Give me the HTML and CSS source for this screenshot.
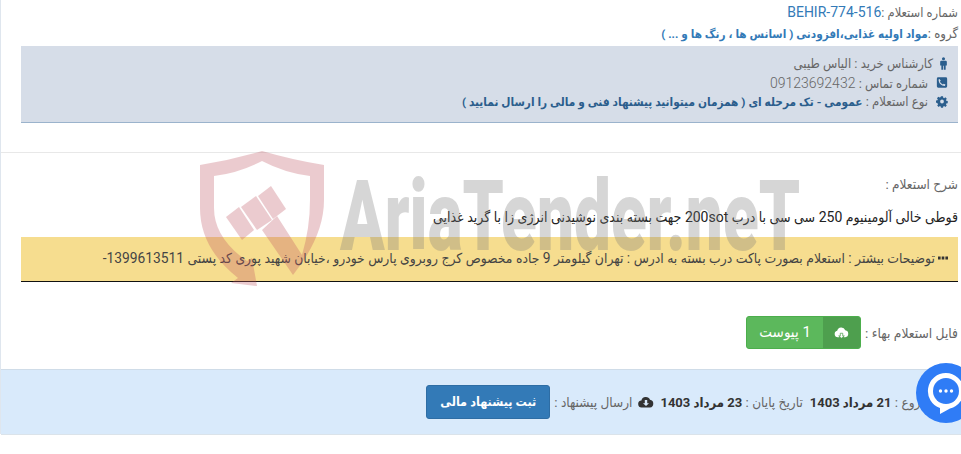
FILE: index.html
```html
<!DOCTYPE html>
<html lang="fa" dir="rtl">
<head>
  <meta charset="UTF-8">
  <meta name="viewport" content="width=device-width, initial-scale=1.0">
  <title>جزئیات استعلام</title>
  <link rel="stylesheet" href="styles.css">
</head>
<body>
  <div class="page">
    <div class="head-info">
      <div class="code-line">شماره استعلام :<span class="code">BEHIR-774-516</span></div>
      <div class="group-line">گروه :<b>مواد اولیه غذایی،افزودنی ( اسانس ها ، رنگ ها و ... )</b></div>
    </div>

    <div class="buyer-box">
      <div class="buyer-row">
        <svg class="ico ico-person" viewBox="0 0 10 14"><circle cx="5" cy="1.800" r="1.700"/><path d="M2.500 4h5a1.200 1.200 0 0 1 1.200 1.200v4H7.400V14H5.400v-4.500h-.8V14H2.600V9.200H1.300v-4A1.200 1.200 0 0 1 2.500 4z"/></svg>
        <span>کارشناس خرید : الیاس طیبی</span>
      </div>
      <div class="buyer-row">
        <svg class="ico" viewBox="0 0 14 14"><path d="M2.500 1h9A1.500 1.500 0 0 1 13 2.500v9a1.500 1.500 0 0 1-1.500 1.500h-9A1.500 1.500 0 0 1 1 11.500v-9A1.500 1.500 0 0 1 2.500 1zm1.600 2L3 3.600C3 8 6 11 10.400 11l.6-1.600-2.100-1-.8 1C6.800 8.900 5.100 7.200 4.600 5.900l1-.8z" fill-rule="evenodd"/></svg>
        <span>شماره تماس : <span class="phone">09123692432</span></span>
      </div>
      <div class="buyer-row">
        <svg class="ico" viewBox="0 0 14 14"><path d="M5.800 1h2.400l.3 1.700 1 .4 1.400-1 1.700 1.700-1 1.400.4 1 1.700.3v2.400l-1.700.3-.4 1 1 1.400-1.700 1.700-1.400-1-1 .4-.3 1.700H5.800l-.3-1.700-1-.4-1.400 1-1.700-1.700 1-1.400-.4-1L0 8.200V5.800l1.700-.3.4-1-1-1.400 1.700-1.700 1.400 1 1-.4zM7 4.800a2.200 2.200 0 1 0 0 4.400 2.200 2.200 0 0 0 0-4.400z" fill-rule="evenodd"/></svg>
        <span>نوع استعلام : <b>عمومی - تک مرحله ای ( همزمان میتوانید پیشنهاد فنی و مالی را ارسال نمایید )</b></span>
      </div>
    </div>

    <hr class="divider">

    <div class="desc-title">شرح استعلام :</div>
    <div class="desc-text">قوطی خالی آلومینیوم 250 سی سی با درب 200sot جهت بسته بندی نوشیدنی انرژی زا با گرید غذایی</div>

    <div class="note-box">
      <svg class="dots" viewBox="0 0 10 4"><rect x="0" y="0.500" width="2.600" height="3"/><rect x="3.700" y="0.500" width="2.600" height="3"/><rect x="7.400" y="0.500" width="2.600" height="3"/></svg>
      <span>توضیحات بیشتر : استعلام بصورت پاکت درب بسته به ادرس : تهران گیلومتر 9 جاده مخصوص کرج روبروی پارس خودرو ،خیابان شهید پوری کد پستی 1399613511-</span>
    </div>

    <div class="file-row">
      <span>فایل استعلام بهاء :</span>
      <a class="attach-btn">
        <span class="attach-ico">
          <svg viewBox="0 0 16 12"><path fill="#fff" d="M4 11a3.500 3.500 0 0 1-.6-6.900A4.500 4.500 0 0 1 12 3.500a3.800 3.800 0 0 1 0 7.500h-1.500L8 8.500 5.500 11z"/><path fill="#fff" d="M6.700 6.800h2.600v2.800H11L8 12 5 9.600h1.700z" stroke="#4e9f4e" stroke-width=".8"/></svg>
        </span>
        <span class="attach-label">1 پیوست</span>
      </a>
    </div>

    <div class="date-bar">
      <span class="date-item">تاریخ شروع : <b>21 مرداد 1403</b></span>
      <span class="date-item date-end">تاریخ پایان : <b>23 مرداد 1403</b></span>
      <svg class="cloud" viewBox="0 0 16 12"><path d="M4 11.500a3.500 3.500 0 0 1-.6-7A4.500 4.500 0 0 1 12 3.800a3.900 3.900 0 0 1 0 7.700zM6.800 4v3.300H5L8 10l3-2.700H9.200V4z" fill-rule="evenodd"/></svg>
      <span class="date-item">ارسال پیشنهاد :</span>
      <a class="submit-btn">ثبت پیشنهاد مالی</a>
    </div>
  </div>

  <!-- watermark over the page -->
  <div class="watermark">
    <svg class="wm-shield" viewBox="0 0 140 145">
      <path d="M5 17Q36 12 67 3Q98 12 129 17V52Q129 88 98 127L67 82L82 68L107 107Q115 80 115 52V28Q90 25 67 13Q44 25 19 28V60Q19 90 52 113L57 110L62 138L36 135L43 130Q5 100 5 60Z"/>
      <path d="M31 69L44 59L59 82L47 92Z"/>
      <path d="M46 59L61 48L77 72L62 82Z"/>
      <path d="M63 48L76 38L91 61L78 71Z"/>
    </svg>
    <span class="wm-text">AriaTender.neT</span>
  </div>

  <div class="chat-bubble">
    <svg viewBox="0 0 40 44"><path fill="#fff" d="M20 2a18 18 0 0 1 4 35.500L14 43v-6A18 18 0 0 1 20 2z"/><circle cx="20" cy="20" r="13" fill="#2f7cf6"/><circle cx="14.500" cy="20" r="1.700" fill="#fff"/><circle cx="20" cy="20" r="1.700" fill="#fff"/><circle cx="25.500" cy="20" r="1.700" fill="#fff"/></svg>
  </div>
</body>
</html>
```

FILE: styles.css
```css
html, body {
  margin: 0;
  padding: 0;
  height: 100%;
  overflow: hidden;
}

body {
  font-family: 'Roboto', 'DejaVu Sans Condensed', 'DejaVu Sans', sans-serif;
  font-size: 14px;
  color: #555;
  background-color: #ffffff;
  position: relative;
}

.page {
  border-left: 1px solid #dfe6ee;
  height: 434px;
  box-sizing: border-box;
}

.head-info {
  padding: 2px 3px 0 0;
  height: 46px;
  box-sizing: border-box;
}

.code-line {
  height: 20px;
  line-height: 20px;
  font-size: 12.800px;
  color: #666;
}

.code {
  font-size: 14px;
  color: #337ab7;
}

.group-line {
  height: 23px;
  line-height: 23px;
  font-size: 13px;
  color: #666;
}

.group-line b {
  font-size: 11.700px;
  color: #337ab7;
}

.buyer-box {
  margin: 0 3px 0 20px;
  height: 77px;
  box-sizing: border-box;
  padding: 8px 10px 0 0;
  background-color: #d6dde8;
  border-bottom: 1px solid #9bb3cc;
}

.buyer-row {
  display: flex;
  align-items: center;
  gap: 8px;
  height: 19px;
  font-size: 13px;
  color: #666;
}

.buyer-row b {
  font-size: 11.750px;
  color: #2b5e8d;
}

.phone {
  font-size: 14px;
  font-weight: 300;
}

.ico {
  width: 12px;
  height: 13px;
  fill: #2b5e8d;
  flex: none;
}

.ico-person {
  width: 9px;
  margin-left: -2px;
}

.divider {
  margin: 29px 0 0 0;
  border: 0;
  border-top: 1px solid #e8e8e8;
}

.desc-title {
  margin-top: 21px;
  padding-right: 3px;
  line-height: 20px;
  font-size: 13.500px;
  color: #666;
}

.desc-text {
  margin-top: 13px;
  padding-right: 3px;
  line-height: 20px;
  color: #222;
  white-space: nowrap;
}

.note-box {
  margin: 10px 3px 0 20px;
  height: 45px;
  box-sizing: border-box;
  padding: 0 10px 3px 0;
  display: flex;
  align-items: center;
  gap: 3px;
  background-color: #f6dd8f;
  border-bottom: 1px solid #111;
  font-size: 13.800px;
  color: #444;
  white-space: nowrap;
}

.dots {
  width: 10px;
  height: 4px;
  fill: #333;
  flex: none;
}

.file-row {
  margin-top: 34px;
  padding-right: 3px;
  display: flex;
  align-items: center;
  gap: 4px;
  height: 33px;
  font-size: 13.700px;
  color: #666;
}

.attach-btn {
  display: flex;
  width: 115px;
  height: 33px;
  box-sizing: border-box;
  border: 1px solid #4cae4c;
  border-radius: 3px;
  background-color: #5cb85c;
  color: #fff;
  overflow: hidden;
}

.attach-ico {
  width: 37px;
  display: flex;
  align-items: center;
  justify-content: center;
  background-color: #4e9f4e;
}

.attach-ico svg {
  width: 15px;
  height: 13px;
}

.attach-label {
  flex: 1;
  text-align: center;
  line-height: 31px;
  font-size: 15px;
}

.date-bar {
  margin-top: 20px;
  height: 66px;
  box-sizing: border-box;
  padding-right: 2px;
  display: flex;
  align-items: center;
  gap: 4px;
  background-color: #d9eafb;
  border-top: 1px solid #cfdce8;
  border-bottom: 1px solid #dbe3ea;
  font-size: 13.500px;
  color: #666;
  white-space: nowrap;
  overflow: hidden;
}

.date-item b {
  font-size: 13px;
  color: #333;
}

.date-end {
  margin-right: 3px;
}

.cloud {
  width: 16px;
  height: 12px;
  fill: #333;
  flex: none;
  margin: 0 2px;
}

.submit-btn {
  padding: 0 13px;
  height: 34px;
  line-height: 32px;
  box-sizing: border-box;
  border: 1px solid #2e6da4;
  border-radius: 3px;
  background-color: #337ab7;
  color: #fff;
  font-size: 12.500px;
  font-weight: 700;
}

.watermark {
  position: absolute;
  left: 195px;
  top: 148px;
  width: 620px;
  height: 145px;
  direction: ltr;
  opacity: 0.3;
  pointer-events: none;
}

.wm-shield {
  position: absolute;
  left: 0;
  top: 0;
  width: 140px;
  height: 145px;
  fill: #c05562;
}

.wm-text {
  position: absolute;
  left: 145px;
  top: 14px;
  font-family: 'Roboto', sans-serif;
  font-weight: 900;
  font-size: 98px;
  line-height: 110px;
  color: #7a7a7a;
  white-space: nowrap;
  transform: scaleX(0.67);
  transform-origin: left center;
}

.chat-bubble {
  position: absolute;
  left: 916px;
  top: 363px;
  width: 60px;
  height: 60px;
  border-radius: 50%;
  background-color: #2f7cf6;
  display: flex;
  align-items: center;
  justify-content: center;
}

.chat-bubble svg {
  width: 40px;
  height: 44px;
}
```
